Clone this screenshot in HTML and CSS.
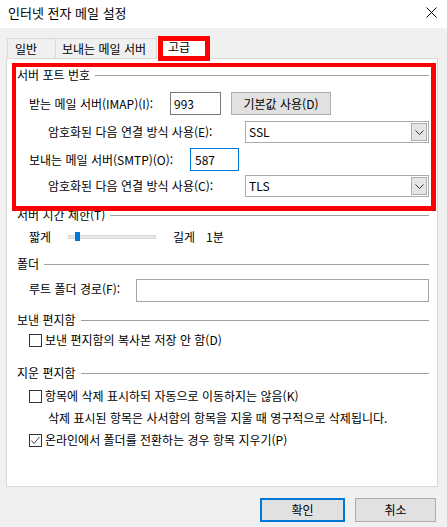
FILE: index.html
```html
<!DOCTYPE html>
<html lang="ko">
<head>
    <meta charset="UTF-8">
    <meta name="viewport" content="width=device-width, initial-scale=1.0">
    <title>인터넷 전자 메일 설정</title>
    <link rel="stylesheet" href="styles.css">
</head>
<body>
    <div class="titlebar">
        <span class="title">인터넷 전자 메일 설정</span>
        <svg class="close" width="11" height="11" viewBox="0 0 11 11">
            <path d="M0.5 0.5 L10.5 10.5 M10.5 0.5 L0.5 10.5" stroke="#000" stroke-width="1" fill="none"/>
        </svg>
    </div>

    <div class="tabs">
        <div class="tab tab-general">일반</div>
        <div class="tab tab-outgoing">보내는 메일 서버</div>
        <div class="tab tab-advanced">고급<span class="mark mark-tab"></span></div>
    </div>

    <div class="panel">
        <span class="mark mark-ports"></span>

        <div class="group-title"><span>서버 포트 번호</span><i class="rule"></i></div>
        <div class="row row-imap">
            <span class="lbl lbl-imap">받는 메일 서버(IMAP)(I):</span>
            <div class="textbox tb-imap">993</div>
            <div class="btn btn-default">기본값 사용(D)</div>
        </div>
        <div class="row row-enc sub">
            <span class="lbl lbl-enc">암호화된 다음 연결 방식 사용(E):</span>
            <div class="combo">SSL<span class="combo-btn"><svg width="9" height="5" viewBox="0 0 9 5"><path d="M0.5 0.5 L4.5 4.5 L8.5 0.5" stroke="#333" fill="none"/></svg></span></div>
        </div>
        <div class="row row-smtp">
            <span class="lbl lbl-smtp">보내는 메일 서버(SMTP)(O):</span>
            <div class="textbox tb-smtp focused">587</div>
        </div>
        <div class="row row-enc2 sub">
            <span class="lbl lbl-enc">암호화된 다음 연결 방식 사용(C):</span>
            <div class="combo">TLS<span class="combo-btn"><svg width="9" height="5" viewBox="0 0 9 5"><path d="M0.5 0.5 L4.5 4.5 L8.5 0.5" stroke="#333" fill="none"/></svg></span></div>
        </div>

        <div class="group-title g-timeout"><span>서버 시간 제한(T)</span><i class="rule"></i></div>
        <div class="row row-slider">
            <span class="lbl lbl-short">짧게</span>
            <div class="track"><span class="thumb"></span></div>
            <span class="lbl lbl-long">길게</span>
            <span class="lbl lbl-min">1분</span>
        </div>

        <div class="group-title g-folder"><span>폴더</span><i class="rule"></i></div>
        <div class="row row-root">
            <span class="lbl lbl-root">루트 폴더 경로(F):</span>
            <div class="textbox tb-root"></div>
        </div>

        <div class="group-title g-sent"><span>보낸 편지함</span><i class="rule"></i></div>
        <div class="row check-row chk-sent">
            <span class="box"></span>
            <span class="lbl">보낸 편지함의 복사본 저장 안 함(D)</span>
        </div>

        <div class="group-title g-deleted"><span>지운 편지함</span><i class="rule"></i></div>
        <div class="row check-row chk-mark">
            <span class="box"></span>
            <span class="lbl">항목에 삭제 표시하되 자동으로 이동하지는 않음(K)</span>
        </div>
        <div class="row info sub">삭제 표시된 항목은 사서함의 항목을 지울 때 영구적으로 삭제됩니다.</div>
        <div class="row check-row chk-purge">
            <span class="box checked"><svg width="11" height="11" viewBox="0 0 11 11"><path d="M1.5 5.5 L4 8.5 L9.5 2" stroke="#444" stroke-width="1" fill="none"/></svg></span>
            <span class="lbl">온라인에서 폴더를 전환하는 경우 항목 지우기(P)</span>
        </div>
    </div>

    <div class="footer">
        <div class="btn btn-ok">확인</div>
        <div class="btn btn-cancel">취소</div>
    </div>
</body>
</html>
```

FILE: styles.css
```css
body {
    margin: 0;
    padding: 0;
    width: 447px;
    height: 527px;
    background: #f0f0f0;
    font-family: "Noto Sans CJK KR", "Noto Sans", sans-serif;
    font-size: 12px;
    color: #000;
    overflow: hidden;
}
.titlebar {
    height: 28px;
    background: #fff;
    display: flex;
    align-items: center;
    justify-content: space-between;
    padding: 0 10px 0 8px;
}
.title {
    font-size: 13px;
    line-height: 16px;
    margin-top: -2px;
}
.close {
    margin-top: -4px;
}
.tabs {
    display: flex;
    align-items: flex-start;
    height: 20px;
    margin: 10px 0 0 7px;
}
.tab {
    height: 20px;
    box-sizing: border-box;
    border: 1px solid #d9d9d9;
    border-bottom: none;
    line-height: 19px;
    white-space: nowrap;
}
.tab-general {
    width: 48px;
    padding-left: 7px;
    border-right: none;
}
.tab-outgoing {
    width: 103px;
    padding-left: 6px;
}
.tab-advanced {
    position: relative;
    z-index: 1;
    width: 53px;
    height: 23px;
    margin: -2px 0 0 -2px;
    padding: 2px 0 0 11px;
    line-height: 16px;
    background: #fff;
}
.mark {
    position: absolute;
    box-sizing: border-box;
    border: 5px solid #ff0000;
}
.mark-tab {
    left: 1px;
    top: -1px;
    width: 52px;
    height: 25px;
}
.panel {
    position: relative;
    box-sizing: border-box;
    width: 432px;
    height: 429px;
    margin-left: 6px;
    padding: 6px 8px 0 10px;
    background: #fff;
    border: 1px solid #d9d9d9;
}
.mark-ports {
    left: 5px;
    top: 4px;
    width: 424px;
    height: 148px;
    border-width: 4px 5px 5px 4px;
    z-index: 2;
}
.group-title {
    display: flex;
    align-items: center;
    height: 20px;
    line-height: 16px;
}
.group-title .rule {
    flex: 1;
    height: 1px;
    margin: 1px 0 0 5px;
    background: #a0a0a0;
}
.row {
    display: flex;
    align-items: center;
    padding-left: 12px;
    line-height: 16px;
    white-space: nowrap;
}
.row.sub {
    padding-left: 31px;
}
.textbox, .combo, .btn {
    box-sizing: border-box;
    height: 100%;
    display: flex;
    align-items: center;
}
.textbox {
    padding-left: 3px;
    border: 1px solid #7a7a7a;
    background: #fff;
}
.textbox.focused {
    border-color: #0078d7;
    padding-left: 4px;
}
.btn {
    justify-content: center;
    background: #e1e1e1;
    border: 1px solid #adadad;
}
.combo {
    position: relative;
    width: 184px;
    padding-left: 3px;
    border: 1px solid #acacac;
    background: #fff;
}
.combo-btn {
    position: absolute;
    right: 1px;
    top: 1px;
    bottom: 1px;
    width: 16px;
    box-sizing: border-box;
    border: 1px solid #adadad;
    background: #e5e5e5;
    display: flex;
    align-items: center;
    justify-content: center;
}
.row-imap { margin-top: 7px; height: 23px; }
.lbl-imap { width: 141px; }
.tb-imap { width: 51px; }
.btn-default { width: 100px; margin-left: 10px; }
.row-enc { margin-top: 6px; height: 22px; }
.lbl-enc { width: 197px; }
.row-smtp { margin-top: 5px; height: 23px; }
.lbl-smtp { width: 161px; }
.tb-smtp { width: 49px; }
.row-enc2 { margin-top: 4px; height: 22px; }

.g-timeout { margin-top: 8px; }
.row-slider { margin-top: 4px; height: 16px; }
.lbl-short { width: 39px; }
.track {
    position: relative;
    width: 88px;
    height: 4px;
    box-sizing: border-box;
    background: #e7eaea;
    border: 1px solid #d6d6d6;
}
.thumb {
    position: absolute;
    left: 6px;
    top: -4px;
    width: 5px;
    height: 9px;
    background: #0078d7;
}
.lbl-long { margin-left: 17px; }
.lbl-min { margin-left: 11px; }

.g-folder { margin-top: 9px; }
.row-root { margin-top: 5px; height: 23px; }
.lbl-root { width: 107px; margin-top: -3px; }
.tb-root { width: 293px; border-color: #a5a5a5; }

.g-sent { margin-top: 8px; }
.check-row { height: 16px; }
.box {
    width: 13px;
    height: 13px;
    box-sizing: border-box;
    border: 1px solid #333;
    background: #fff;
    margin-right: 3px;
    display: flex;
    align-items: center;
    justify-content: center;
}
.chk-sent { margin-top: 2px; }
.g-deleted { margin-top: 15px; }
.chk-mark { margin-top: 5px; }
.info { margin-top: 6px; height: 16px; }
.chk-purge { margin-top: 6px; }

.footer {
    display: flex;
    justify-content: flex-end;
    gap: 10px;
    margin-top: 11px;
    padding-right: 11px;
}
.footer .btn {
    height: 24px;
    line-height: 16px;
}
.btn-ok {
    width: 85px;
    border: 2px solid #0078d7;
}
.btn-cancel {
    width: 81px;
}
```
